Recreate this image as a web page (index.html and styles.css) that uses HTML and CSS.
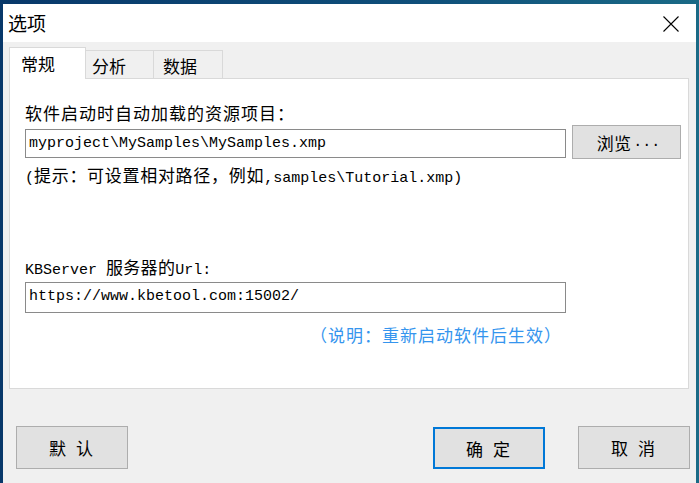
FILE: index.html
```html
<!DOCTYPE html>
<html lang="zh">
<head>
<meta charset="utf-8">
<title>选项</title>
<link rel="stylesheet" href="styles.css">
</head>
<body>
<div class="window">
  <div class="titlebar">
    <span class="title">选项</span>
    <svg class="close" width="16" height="16" viewBox="0 0 16 16"><path d="M0.5 0.5 L15.5 15.5 M15.5 0.5 L0.5 15.5" stroke="#000" stroke-width="1.1" fill="none"/></svg>
  </div>
  <div class="content">
    <div class="tabs">
      <div class="tab active">常规</div>
      <div class="tab">分析</div>
      <div class="tab">数据</div>
    </div>
    <div class="panel">
      <div class="label first cjk">软件启动时自动加载的资源项目：</div>
      <div class="row">
        <div class="input mono">myproject\MySamples\MySamples.xmp</div>
        <div class="btn browse"><span class="cjk">浏览</span><span class="mono">...</span></div>
      </div>
      <div class="hint"><span class="mono">(</span><span class="cjk">提示：可设置相对路径，例如</span><span class="mono">,samples\Tutorial.xmp)</span></div>
      <div class="label second"><span class="mono">KBServer </span><span class="cjk">服务器的</span><span class="mono">Url:</span></div>
      <div class="input url mono">https://www.kbetool.com:15002/</div>
      <div class="note">（说明：重新启动软件后生效）</div>
    </div>
    <div class="buttons">
      <div class="btn big">默 认</div>
      <div class="group">
        <div class="btn big primary">确 定</div>
        <div class="btn big">取 消</div>
      </div>
    </div>
  </div>
</div>
</body>
</html>
```

FILE: styles.css
```css
* { box-sizing: border-box; }
html, body { margin: 0; padding: 0; }
body {
  width: 699px;
  height: 483px;
  overflow: hidden;
  background: linear-gradient(to right, #08386a 0%, #0f4f7a 60%, #1a6a86 100%);
  font-family: "Noto Sans CJK SC", sans-serif;
  color: #000;
}
.window {
  margin: 4px 3px 0 3px;
  height: 479px;
  background: #f0f0f0;
  display: flex;
  flex-direction: column;
}
.titlebar {
  height: 38px;
  background: #fff;
  display: flex;
  align-items: center;
  justify-content: space-between;
  padding: 0 17px 0 5px;
}
.title {
  font-size: 19px;
  line-height: 24px;
}
.close { display: block; margin-top: 1px; }
.content {
  padding: 5px 7px 0 6px;
  display: flex;
  flex-direction: column;
}
.tabs {
  display: flex;
  align-items: flex-end;
  height: 31px;
  position: relative;
  z-index: 1;
}
.tab {
  height: 28px;
  border: 1px solid #d9d9d9;
  border-bottom: none;
  background: #f0f0f0;
  font-size: 17px;
  line-height: 30px;
  padding: 0 8px 0 6px;
  margin-left: -1px;
}
.tab:nth-child(2) { width: 69px; }
.tab:nth-child(3) { width: 70px; padding-left: 9px; }
.tab.active {
  height: 32px;
  width: 77px;
  margin-left: 0;
  margin-bottom: -1px;
  background: #fff;
  padding-left: 11px;
  line-height: 31px;
}
.panel {
  height: 311px;
  background: #fff;
  border: 1px solid #d9d9d9;
  padding: 0 0 0 15px;
}
.cjk { font-family: "Noto Sans CJK SC", sans-serif; font-size: 17px; letter-spacing: 0.3px; }
.mono { font-family: "Liberation Mono", monospace; font-size: 15px; }
.label {
  height: 24px;
  line-height: 24px;
  white-space: nowrap;
}
.label.first { margin-top: 22px; letter-spacing: 1px; }
.label.second { margin-top: 68px; }
.row {
  display: flex;
  align-items: flex-start;
}
.input {
  width: 541px;
  height: 30px;
  border: 1px solid #8a8a8a;
  background: #fff;
  line-height: 28px;
  padding-left: 3px;
  white-space: nowrap;
}
.row .input { margin-top: 4px; height: 29px; line-height: 27px; }
.input.url { margin-top: 3px; height: 31px; }
.btn {
  background: #e1e1e1;
  border: 1px solid #adadad;
  display: flex;
  align-items: center;
  justify-content: center;
  white-space: nowrap;
}
.browse {
  width: 109px;
  height: 34px;
  margin-left: 6px;
  padding-left: 4px;
}
.browse .mono { letter-spacing: 0; margin-left: 2px; }
.hint {
  margin-top: 4px;
  height: 24px;
  line-height: 24px;
  white-space: nowrap;
}
.hint .cjk { letter-spacing: 0.7px; }
.note {
  margin-top: 10px;
  width: 541px;
  text-align: right;
  padding-right: 4px;
  font-size: 17px;
  letter-spacing: 1px;
  line-height: 24px;
  color: #3595ee;
}
.buttons {
  display: flex;
  justify-content: space-between;
  margin-top: 37px;
  margin-left: 7px;
  margin-right: -1px;
}
.group { display: flex; gap: 33px; }
.btn.big {
  width: 112px;
  height: 43px;
  font-size: 17px;
  letter-spacing: 3px;
  padding-left: 3px;
  padding-right: 2px;
}
.btn.primary {
  border: 2px solid #0078d7;
  margin-top: 1px;
  height: 42px;
}
```
